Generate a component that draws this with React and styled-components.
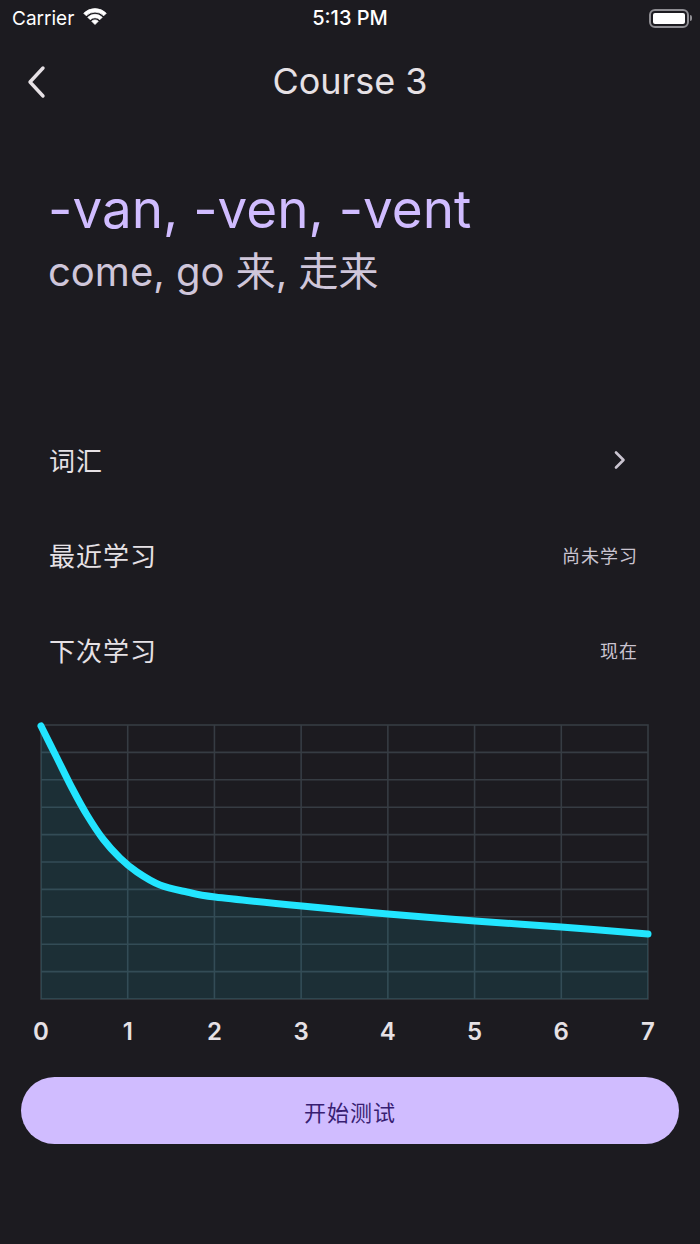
import React from "react";
import styled, { createGlobalStyle } from "styled-components";

const GlobalStyle = createGlobalStyle`
  html, body {
    margin: 0;
    padding: 0;
    background: #1c1b20;
  }
  body {
    font-family: Inter, "Noto Sans CJK SC", sans-serif;
    color: #e6e1e5;
  }
`;

const rows = [
  { label: "词汇", chevron: true },
  { label: "最近学习", value: "尚未学习" },
  { label: "下次学习", value: "现在" },
];

// retention curve, in chart px (width 607, height 274)
const points = [
  [0, 1], [16, 33], [31, 63], [46, 90], [62, 114], [79, 133],
  [96, 147], [119, 160], [146, 167], [174, 172], [261, 181],
  [347, 189], [434, 196], [520, 202], [607, 209],
];

const CHART_W = 607;
const CHART_H = 274;

function smoothPath(pts) {
  let d = `M${pts[0][0]},${pts[0][1]}`;
  for (let i = 0; i < pts.length - 1; i++) {
    const p0 = pts[i - 1] || pts[i];
    const p1 = pts[i];
    const p2 = pts[i + 1];
    const p3 = pts[i + 2] || p2;
    const c1x = p1[0] + (p2[0] - p0[0]) / 6;
    const c1y = p1[1] + (p2[1] - p0[1]) / 6;
    const c2x = p2[0] - (p3[0] - p1[0]) / 6;
    const c2y = p2[1] - (p3[1] - p1[1]) / 6;
    d += ` C${c1x},${c1y} ${c2x},${c2y} ${p2[0]},${p2[1]}`;
  }
  return d;
}

// one wifi band between radius r1 and r2, fanned 45deg each side
function wifiBand(r1, r2) {
  const k = 0.7071;
  const cx = 12;
  const cy = 16.5;
  const o = `${cx - k * r2},${cy - k * r2}`;
  const o2 = `${cx + k * r2},${cy - k * r2}`;
  const i2 = `${cx + k * r1},${cy - k * r1}`;
  const i1 = `${cx - k * r1},${cy - k * r1}`;
  if (r1 === 0) {
    return `M${cx},${cy} L${o} A${r2} ${r2} 0 0 1 ${o2} Z`;
  }
  return `M${o} A${r2} ${r2} 0 0 1 ${o2} L${i2} A${r1} ${r1} 0 0 0 ${i1} Z`;
}

const WifiIcon = () => (
  <svg width="24" height="17" viewBox="0 0 24 17">
    <path d={wifiBand(0, 4.6)} fill="#fff" strokeLinejoin="round" stroke="#fff" strokeWidth="0.8" />
    <path d={wifiBand(6.8, 10.2)} fill="#fff" strokeLinejoin="round" stroke="#fff" strokeWidth="0.8" />
    <path d={wifiBand(12.4, 15.9)} fill="#fff" strokeLinejoin="round" stroke="#fff" strokeWidth="0.8" />
  </svg>
);

const App = () => {
  const curve = smoothPath(points);
  const area = `${curve} L${CHART_W},${CHART_H} L0,${CHART_H} Z`;
  const cols = [1, 2, 3, 4, 5, 6];
  const lines = [1, 2, 3, 4, 5, 6, 7, 8, 9];

  return (
    <Screen>
      <GlobalStyle />
      <StatusBar>
        <Carrier>
          Carrier
          <WifiIcon />
        </Carrier>
        <Time>5:13 PM</Time>
        <Battery>
          <BatteryBody>
            <BatteryFill />
          </BatteryBody>
          <BatteryCap />
        </Battery>
      </StatusBar>

      <NavBar>
        <BackButton>
          <svg width="22" height="34" viewBox="0 0 22 34">
            <path d="M18 3 L5 17 L18 31" fill="none" stroke="#e6e1e5" strokeWidth="3.4" strokeLinecap="round" strokeLinejoin="round" />
          </svg>
        </BackButton>
        <Title>Course 3</Title>
      </NavBar>

      <Hero>
        <Root>-van, -ven, -vent</Root>
        <Meaning>come, go 来, 走来</Meaning>
      </Hero>

      <List>
        {rows.map((row) => (
          <Row key={row.label}>
            <RowLabel>{row.label}</RowLabel>
            {row.chevron ? (
              <Chevron width="14" height="20" viewBox="0 0 14 20">
                <path d="M3 2.5 L10.5 10 L3 17.5" fill="none" stroke="#cac4d0" strokeWidth="2.6" strokeLinecap="round" strokeLinejoin="round" />
              </Chevron>
            ) : (
              <RowValue>{row.value}</RowValue>
            )}
          </Row>
        ))}
      </List>

      <ChartBox>
        <svg width={CHART_W} height={CHART_H} viewBox={`0 0 ${CHART_W} ${CHART_H}`} style={{ overflow: "visible", display: "block" }}>
          {cols.map((c) => (
            <line key={`c${c}`} x1={(c * CHART_W) / 7} x2={(c * CHART_W) / 7} y1="0" y2={CHART_H} stroke="#363c43" strokeWidth="1.6" />
          ))}
          {lines.map((l) => (
            <line key={`l${l}`} x1="0" x2={CHART_W} y1={(l * CHART_H) / 10} y2={(l * CHART_H) / 10} stroke="#363c43" strokeWidth="1.6" />
          ))}
          <rect x="0" y="0" width={CHART_W} height={CHART_H} fill="none" stroke="#363c43" strokeWidth="1.6" />
          <path d={area} fill="rgba(34, 229, 255, 0.1)" />
          <path d={curve} fill="none" stroke="#22e5ff" strokeWidth="7" strokeLinecap="round" strokeLinejoin="round" />
        </svg>
      </ChartBox>

      <Axis>
        {[0, 1, 2, 3, 4, 5, 6, 7].map((n) => (
          <Tick key={n}>{n}</Tick>
        ))}
      </Axis>

      <StartButton>开始测试</StartButton>
    </Screen>
  );
};

const Screen = styled.div`
  width: 700px;
  min-height: 1244px;
  background: #1c1b20;
  display: flex;
  flex-direction: column;
`;

const StatusBar = styled.div`
  height: 36px;
  display: flex;
  align-items: center;
  justify-content: space-between;
  padding: 0 8px 0 12px;
  position: relative;
  color: #fff;
`;

const Carrier = styled.div`
  display: flex;
  align-items: center;
  gap: 9px;
  font-size: 19px;
  svg {
    margin-top: -4px;
  }
`;

const Time = styled.div`
  position: absolute;
  left: 0;
  right: 0;
  text-align: center;
  font-size: 20px;
  font-weight: 500;
  pointer-events: none;
`;

const Battery = styled.div`
  display: flex;
  align-items: center;
  gap: 1px;
`;

const BatteryBody = styled.div`
  width: 40px;
  height: 19px;
  border: 2px solid #8e8d92;
  border-radius: 6px;
  padding: 2px;
  box-sizing: border-box;
`;

const BatteryFill = styled.div`
  width: 100%;
  height: 100%;
  background: #fff;
  border-radius: 2px;
`;

const BatteryCap = styled.div`
  width: 2px;
  height: 6px;
  background: #8e8d92;
  border-radius: 0 2px 2px 0;
`;

const NavBar = styled.div`
  height: 92px;
  display: flex;
  align-items: center;
  justify-content: center;
  position: relative;
`;

const BackButton = styled.div`
  position: absolute;
  left: 25px;
  top: 29px;
  display: flex;
`;

const Title = styled.div`
  font-size: 36px;
  font-weight: 400;
  color: #e6e1e5;
  margin-top: -2px;
`;

const Hero = styled.div`
  padding: 50px 0 0 48px;
  display: flex;
  flex-direction: column;
`;

const Root = styled.div`
  font-size: 53px;
  line-height: 62px;
  color: #d0bcff;
`;

const Meaning = styled.div`
  font-size: 40px;
  line-height: 44px;
  color: #cfc6da;
  margin-top: 10px;
`;

const List = styled.div`
  margin-top: 118px;
  padding: 0 62px 0 49px;
  display: flex;
  flex-direction: column;
`;

const Row = styled.div`
  height: 95px;
  display: flex;
  align-items: center;
  justify-content: space-between;
`;

const RowLabel = styled.div`
  font-size: 26px;
  letter-spacing: 1px;
  color: #e6e1e5;
`;

const RowValue = styled.div`
  font-size: 18px;
  letter-spacing: 1px;
  color: #cac4d0;
`;

const Chevron = styled.svg`
  margin-right: 11px;
`;

const ChartBox = styled.div`
  margin: 28px 0 0 41px;
  width: 607px;
`;

const Axis = styled.div`
  margin: 18px 0 0 29px;
  width: 631px;
  display: flex;
  justify-content: space-between;
`;

const Tick = styled.div`
  width: 24px;
  text-align: center;
  font-size: 24px;
  font-weight: 600;
  line-height: 30px;
  color: #e6e1e5;
`;

const StartButton = styled.button`
  margin: 30px 21px 0;
  height: 67px;
  border: none;
  border-radius: 34px;
  background: #d0bcff;
  color: #381e72;
  font-family: Inter, "Noto Sans CJK SC", sans-serif;
  font-size: 22px;
  letter-spacing: 1px;
  cursor: pointer;
`;

export default App;
